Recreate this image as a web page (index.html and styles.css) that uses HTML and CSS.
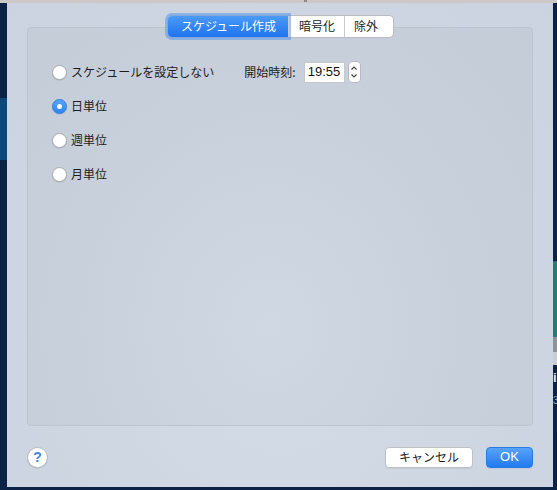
FILE: index.html
```html
<!DOCTYPE html>
<html lang="ja">
<head>
<meta charset="utf-8">
<link rel="stylesheet" href="styles.css">
</head>
<body>
<div class="screen">
  <div class="topbar"><span class="topdot"></span></div>
  <div class="main">
    <div class="edge-left"><div class="edge-hl"></div></div>
    <div class="dialog">
      <div class="tabs">
        <div class="seg seg-on">スケジュール作成</div>
        <div class="seg">暗号化</div>
        <div class="seg">除外</div>
      </div>
      <div class="panel">
        <div class="options">
          <div class="opt">
            <span class="radio"></span><span class="label">スケジュールを設定しない</span>
            <span class="start-label">開始時刻:</span>
            <span class="timefield">19:55</span>
            <span class="stepper">
              <svg width="8" height="16" viewBox="0 0 8 16"><path d="M1.5 5.5 L4 3 L6.5 5.5" fill="none" stroke="#444" stroke-width="1.1"/><path d="M1.5 10.5 L4 13 L6.5 10.5" fill="none" stroke="#444" stroke-width="1.1"/></svg>
            </span>
          </div>
          <div class="opt"><span class="radio radio-on"></span><span class="label">日単位</span></div>
          <div class="opt"><span class="radio"></span><span class="label">週単位</span></div>
          <div class="opt"><span class="radio"></span><span class="label">月単位</span></div>
        </div>
      </div>
      <div class="footer">
        <span class="help">?</span>
        <div class="buttons">
          <span class="btn">キャンセル</span>
          <span class="btn btn-ok">OK</span>
        </div>
      </div>
    </div>
    <div class="edge-right">
      <div class="er-line"></div>
      <div class="er-teal"></div>
      <div class="er-grey"></div>
      <div class="er-lgrey"></div>
      <div class="er-text">i</div>
      <div class="er-text2">3</div>
    </div>
  </div>
</div>
</body>
</html>
```
FILE: styles.css
```css
* { box-sizing: border-box; }
html, body { margin: 0; padding: 0; }
body {
  width: 557px;
  height: 490px;
  overflow: hidden;
  background: #0c2247;
  font-family: "Noto Sans CJK JP", "Liberation Sans", sans-serif;
  font-size: 12px;
  line-height: 1.2;
  color: #222;
}
.screen { width: 557px; height: 490px; display: flex; flex-direction: column; }
.topbar {
  height: 3px;
  background: #cbc8c5;
  position: relative;
}
.topdot {
  position: absolute; left: 304px; top: 0; width: 3px; height: 2px; background: #8d8a88;
}
.main { display: flex; height: 484px; }
.edge-left { width: 7px; background: #0b2247; padding-top: 95px; }
.edge-hl { height: 62px; background: #0d4776; }
.edge-right {
  width: 4px;
  background: #0b2247;
  display: flex;
  flex-direction: column;
  padding-top: 258px;
  overflow: hidden;
}
.er-line { height: 1px; background: #3a5a7a; }
.er-teal { height: 75px; background: #1f7d73; }
.er-grey { height: 15px; background: #8f9398; }
.er-lgrey { height: 13px; background: #c9ccd0; }
.er-text { color: #e6ecf3; font: bold 13px/15px "Liberation Sans", sans-serif; margin-top: 5px; }
.er-text2 { color: #98a6b8; font: 10px/12px "Liberation Sans", sans-serif; margin-top: 10px; }

.dialog {
  width: 546px;
  height: 484px;
  background: radial-gradient(ellipse at 50% 65%, #d5dde8 0%, #cdd6e1 60%, #cad3df 100%);
  padding: 13px 20px 0 20px;
  display: flex;
  flex-direction: column;
}
.tabs {
  align-self: center;
  display: flex;
  height: 21px;
  border-radius: 4px;
  background: #fff;
  box-shadow: 0 0 0 1px #b9bcc2, 0 1px 1px rgba(0,0,0,0.08);
  position: relative;
  z-index: 2;
  margin-left: 1px;
}
.seg {
  display: flex;
  align-items: center;
  font-size: 12px;
  color: #1e1e1e;
  border-left: 1px solid #c8cacf;
}
.seg:first-child { border-left: none; }
.seg:nth-child(2) { padding: 0 9px 0 10px; }
.seg:nth-child(3) { padding: 0 15px 0 9px; }
.seg-on {
  background: linear-gradient(#4b9bf7, #1f73ee);
  color: #fff;
  border-radius: 4px 0 0 4px;
  padding: 0 12px 0 13px;
  box-shadow: 0 0 0 3px rgba(90, 150, 235, 0.55);
}
.panel {
  margin-top: -10px;
  height: 399px;
  background: radial-gradient(ellipse at 48% 75%, #d0d8e3 0%, #c8d0db 55%, #c4ccd7 100%);
  border: 1px solid #bcc4cf;
  border-radius: 4px;
  padding: 34px 0 0 24px;
}
.options { display: flex; flex-direction: column; gap: 14px; }
.opt { display: flex; align-items: center; height: 20px; line-height: 20px; }
.radio {
  width: 15px; height: 15px;
  border-radius: 50%;
  background: #fff;
  border: 1px solid #a9adb3;
  box-shadow: 0 0.5px 1px rgba(0,0,0,0.15);
  margin-right: 4px;
  flex: none;
  display: flex; align-items: center; justify-content: center;
}
.radio-on {
  background: linear-gradient(#5aa5f8, #2e82f2);
  border-color: #2f7fe6;
}
.radio-on::after {
  content: "";
  width: 5px; height: 5px; border-radius: 50%; background: #fff;
}
.label { font-size: 12px; color: #1c1c1c; }
.start-label { margin-left: 30px; font-size: 12px; color: #1c1c1c; }
.timefield {
  margin-left: 8px;
  width: 41px; height: 21px;
  background: #fff;
  border: 1px solid #c4c7cc;
  font-family: "Liberation Sans", sans-serif;
  font-size: 13px;
  color: #111;
  display: flex; align-items: center; justify-content: center;
}
.stepper {
  margin-left: 3px;
  width: 13px; height: 22px;
  background: #fff;
  border: 1px solid #b7bbc1;
  border-radius: 4px;
  display: flex; align-items: center; justify-content: center;
}
.footer {
  margin-top: 20px;
  height: 22px;
  display: flex;
  align-items: center;
  justify-content: space-between;
}
.help {
  width: 21px; height: 21px;
  border-radius: 50%;
  background: #fff;
  border: 1px solid #b4b9c0;
  color: #3d84e6;
  font: bold 14px "Liberation Sans", sans-serif;
  display: flex; align-items: center; justify-content: center;
  box-shadow: 0 1px 1px rgba(0,0,0,0.08);
}
.buttons { display: flex; gap: 13px; }
.btn {
  width: 88px; height: 21px;
  background: #fff;
  border: 1px solid #bdc0c5;
  border-radius: 4px;
  display: flex; align-items: center; justify-content: center;
  font-size: 12px;
  color: #1c1c1c;
  box-shadow: 0 1px 1px rgba(0,0,0,0.06);
}
.btn-ok {
  width: 47px;
  background: linear-gradient(#59a3f8, #217aef);
  border-color: #2a7ae6;
  color: #fff;
  font-family: "Liberation Sans", sans-serif;
  font-size: 13px;
}
```
